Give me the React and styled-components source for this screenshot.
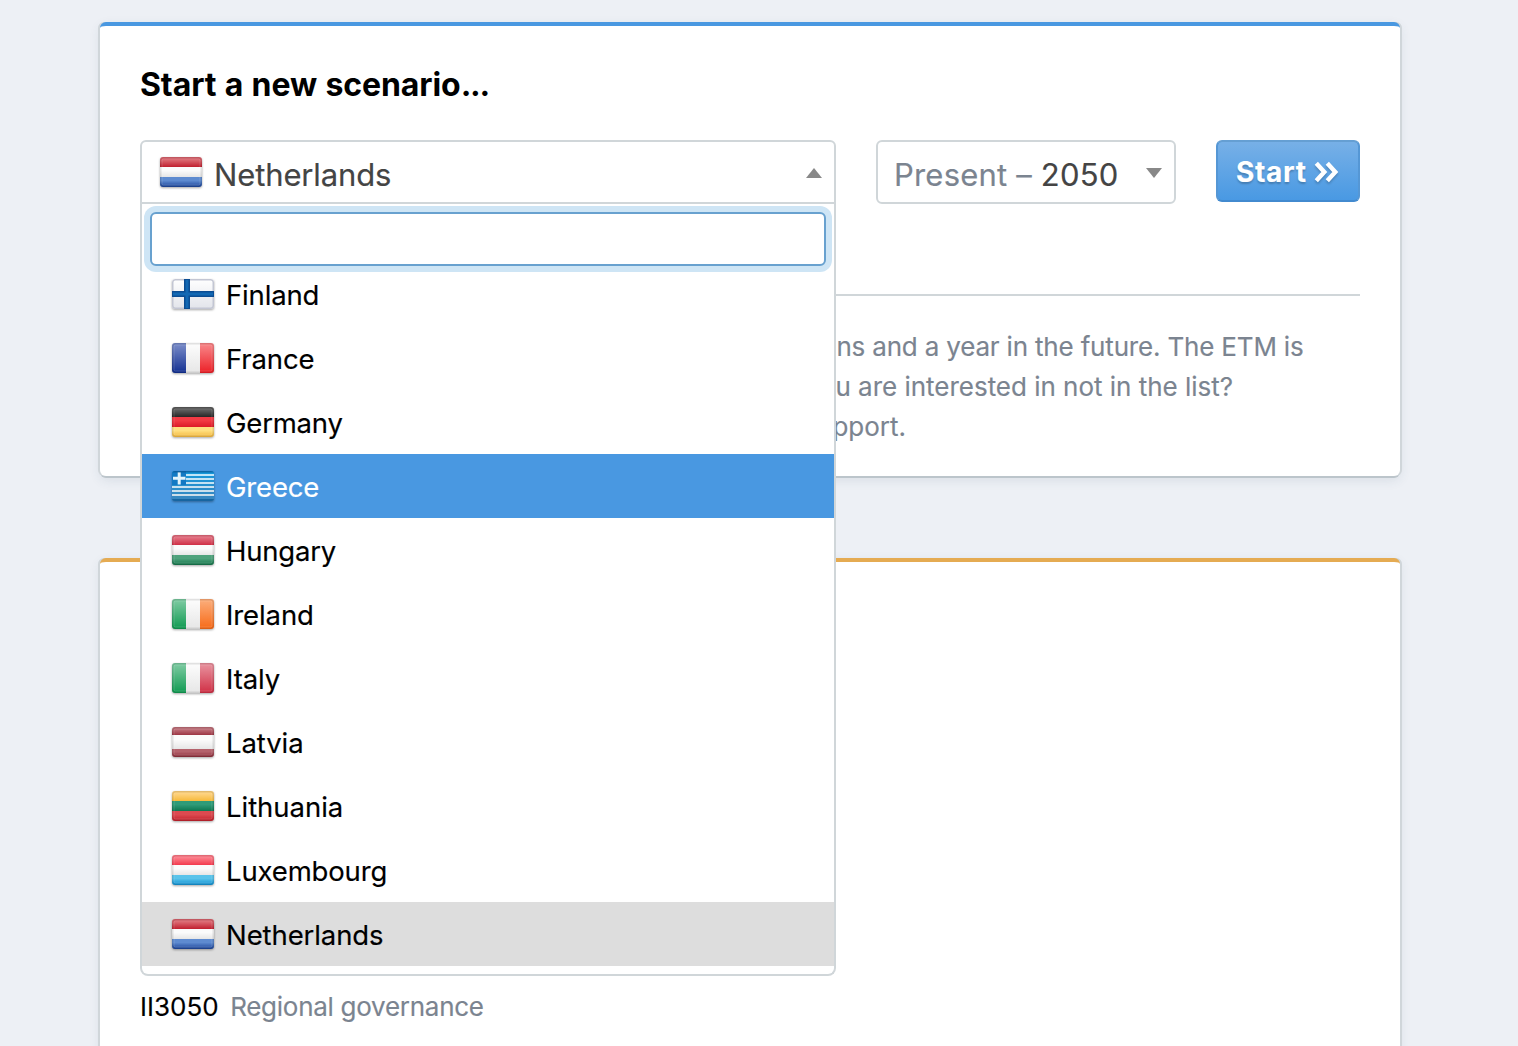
import React, { useId } from "react";
import styled, { createGlobalStyle } from "styled-components";

const GlobalStyle = createGlobalStyle`
  * { box-sizing: border-box; }
  body {
    margin: 0;
    background: #edf0f5;
    color: #000;
    font-family: Inter, "Liberation Sans", sans-serif;
    -webkit-text-stroke: 0.15px currentColor;
  }
`;

const Page = styled.main`
  height: 1046px;
  padding: 22px 118px 0 100px;
  overflow: hidden;
  display: flex;
  flex-direction: column;
  gap: 82px;
`;

const Card = styled.section`
  flex: none;
  height: ${(p) => p.$height}px;
  padding: ${(p) => p.$top}px 40px 0;
  background: #fff;
  border-top: 4px solid ${(p) => p.$accent};
  border-radius: 6px;
  box-shadow: -2px 0 0 #d0d6da, 2px 0 0 #d0d6da, 0 2px 0 #bcc5cb,
    0 4px 12px rgba(50, 70, 100, 0.11);
`;

const Title = styled.h2`
  margin: 0 0 35px;
  font-size: 32px;
  line-height: 40px;
  font-weight: 700;
  letter-spacing: -0.09px;
  word-spacing: 0.9px;
  -webkit-text-stroke: 0;
`;

const Dots = styled.span`
  letter-spacing: -1.2px;
`;

const Controls = styled.div`
  display: flex;
  align-items: flex-start;
  gap: 40px;
  height: 154px;
`;

const Select = styled.div`
  position: relative;
  flex: none;
  width: ${(p) => p.$width}px;
`;

const SelectBox = styled.div`
  display: flex;
  align-items: center;
  height: 64px;
  padding: 0 12px 0 ${(p) => p.$inset}px;
  border: 2px solid #d0d6d9;
  border-radius: ${(p) => (p.$open ? "6px 6px 0 0" : "6px")};
  background: #fff;
`;

const SelectValue = styled.span`
  flex: 1;
  padding-top: 5px;
  margin-left: ${(p) => p.$gap || 0}px;
  font-size: 31px;
  line-height: 40px;
  letter-spacing: ${(p) => p.$spacing}px;
  color: #444;
  white-space: pre;
`;

const Muted = styled.span`
  color: #7b8490;
`;

const Caret = styled.span`
  width: 0;
  height: 0;
  border: 8px solid transparent;
  border-width: ${(p) => (p.$up ? "0 8px 10px" : "10px 8px 0")};
  border-color: ${(p) => (p.$up ? "transparent transparent #888" : "#888 transparent transparent")};
  margin-top: 2px;
`;

const StartButton = styled.button`
  display: flex;
  align-items: center;
  flex: none;
  width: 144px;
  height: 62px;
  padding: 2px 0 0 18px;
  border: 2px solid;
  border-color: #659fd3 #5597d5 #428acf;
  border-radius: 6px;
  background: linear-gradient(#77b0e7, #4999e3) padding-box, #5597d5;
  color: #fff;
  font: 700 28px/40px Inter, "Liberation Sans", sans-serif;
  letter-spacing: 0.7px;
  text-shadow: 0 2px 2px rgba(0, 0, 0, 0.22);
`;

const Chevrons = styled.svg`
  margin-left: 8px;
  width: 24px;
  height: 24px;
  overflow: visible;
  filter: drop-shadow(0 2px 1px rgba(0, 0, 0, 0.2));
`;

const Help = styled.div`
  border-top: 2px solid #d0d6d9;
  padding-top: 31px;
`;

const HelpLine = styled.p`
  margin: 0;
  width: ${(p) => p.$end}px;
  text-align: right;
  font-size: 26px;
  line-height: 40px;
  letter-spacing: ${(p) => p.$spacing}px;
  color: #7b8490;
  white-space: nowrap;
`;

const Dropdown = styled.div`
  position: absolute;
  top: 64px;
  left: 0;
  z-index: 5;
  width: 100%;
  height: 772px;
  padding-top: 8px;
  display: flex;
  flex-direction: column;
  background: #fff;
  border: 2px solid #d0d6d9;
  border-top: 0;
  border-radius: 0 0 8px 8px;
`;

const Search = styled.input`
  flex: none;
  height: 54px;
  margin: 0 8px 6px;
  border: 2px solid #68a1cf;
  border-radius: 6px;
  background: #fff;
  box-shadow: 0 0 0 6px #cee5f5;
  outline: none;
`;

const List = styled.ul`
  display: flex;
  flex-direction: column;
  justify-content: flex-end;
  height: 694px;
  margin: 0;
  padding: 0;
  overflow: hidden;
  list-style: none;
`;

const Option = styled.li`
  flex: none;
  display: flex;
  align-items: center;
  gap: 12px;
  height: 64px;
  padding-left: 30px;
  font-size: 27.5px;
  letter-spacing: ${(p) => p.$spacing || 0}px;
  color: ${(p) => (p.$highlighted ? "#fff" : "#000")};
  background: ${(p) => (p.$highlighted ? "#4998e1" : p.$selected ? "#ddd" : "transparent")};
`;

const OptionName = styled.span`
  padding-top: 2px;
`;

const Scenario = styled.div`
  display: flex;
  gap: 11.5px;
  font-size: 26px;
  line-height: 40px;
`;

const ScenarioNote = styled.span`
  color: #7b8490;
  letter-spacing: -0.27px;
`;

const FlagSvg = styled.svg`
  flex: none;
  width: 42px;
  height: 30px;
  overflow: visible;
  filter: drop-shadow(0 1px 1px rgba(0, 0, 0, 0.35));
`;

const WHITE = ["#fbfbfb", "#e6e6e6"];

const FLAGS = {
  Netherlands: { bands: [["#d9636c", "#c01f2f"], WHITE, ["#5e8bd0", "#1c4499"]] },
  France: { vertical: true, bands: [["#7285c4", "#122f91"], WHITE, ["#f77f82", "#ec1f26"]] },
  Germany: { bands: [["#5a5a5a", "#262626"], ["#f23a44", "#dc1a27"], ["#ffdf80", "#f3b73c"]] },
  Hungary: { bands: [["#e0697a", "#cf2f45"], WHITE, ["#4fa27c", "#14754a"]] },
  Ireland: { vertical: true, bands: [["#76c79c", "#0f9a51"], WHITE, ["#fba873", "#f76a17"]] },
  Italy: { vertical: true, bands: [["#76c79c", "#0f9a51"], WHITE, ["#e68b98", "#d02f45"]] },
  Latvia: { sizes: [8, 14, 8], bands: [["#bd6c76", "#9c3543"], WHITE, ["#b4626c", "#8d2c39"]] },
  Lithuania: { bands: [["#fdd079", "#f6b93a"], ["#2f9b78", "#0d7650"], ["#dc4a50", "#c2202b"]] },
  Luxembourg: { bands: [["#fb7784", "#f33a4d"], WHITE, ["#59c3ea", "#1090d2"]] },
};

function Bands({ id, bands, vertical, sizes }) {
  const lengths = sizes || (vertical ? [14, 14, 14] : [10, 10, 10]);
  let start = 0;
  return bands.map(([light, dark], i) => {
    const from = start;
    start += lengths[i];
    return (
      <g key={i}>
        <linearGradient id={`${id}b${i}`} x1="0" y1="0" x2="0" y2="1">
          <stop offset="0" stopColor={light} />
          <stop offset={vertical ? 0.1 : 0.35} stopColor={light} />
          <stop offset="1" stopColor={dark} />
        </linearGradient>
        <rect
          x={vertical ? from : 0}
          y={vertical ? 0 : from}
          width={vertical ? lengths[i] : 42}
          height={vertical ? 30 : lengths[i]}
          fill={`url(#${id}b${i})`}
        />
      </g>
    );
  });
}

function Finland({ id }) {
  return (
    <>
      <linearGradient id={`${id}w`} x1="0" y1="0" x2="0" y2="1">
        <stop offset="0" stopColor="#fff" />
        <stop offset="1" stopColor="#e2e4ea" />
      </linearGradient>
      <rect width="42" height="30" fill={`url(#${id}w)`} />
      <rect x="0.75" y="0.75" width="40.500" height="28.500" rx="2.500" fill="none" stroke="#c3c6d3" strokeWidth="1.500" />
      <path d="M12 0h6v30h-6zM0 12h42v6H0z" fill="#0b4d93" />
      <path d="M13.500 1h3v28h-3zM1 13.500h40v3H1z" fill="#1268b3" />
    </>
  );
}

function Greece({ id }) {
  return (
    <>
      <linearGradient id={`${id}s`} x1="0" y1="0" x2="0" y2="1">
        <stop offset="0" stopColor="#1499dd" />
        <stop offset="1" stopColor="#3b86bd" />
      </linearGradient>
      <linearGradient id={`${id}l`} gradientUnits="userSpaceOnUse" x1="0" y1="0" x2="0" y2="30">
        <stop offset="0" stopColor="#bfe6fa" />
        <stop offset="1" stopColor="#cfdce6" />
      </linearGradient>
      <rect width="42" height="30" fill={`url(#${id}s)`} />
      <path
        d="M0 3h42v2H0zM0 7h42v2H0zM0 11h42v2H0zM0 15h42v2H0zM0 19h42v2H0zM0 23h42v2H0z"
        fill={`url(#${id}l)`}
      />
      <rect width="14" height="14" fill="#1279c4" />
      <path d="M5.700 1h3v12.500h-3zM1 5.700h12.500v3H1z" fill="#e3f3fb" />
      <path d="M0 0h42v1.500H0zM0 28h42v2H0z" fill="#0c5a97" fillOpacity="0.75" />
    </>
  );
}

function Flag({ country }) {
  const id = useId().replace(/[^a-zA-Z0-9]/g, "");
  const plain = country === "Finland" || country === "Greece";
  return (
    <FlagSvg viewBox="0 0 42 30" aria-hidden="true">
      <clipPath id={`${id}c`}>
        <rect width="42" height="30" rx="3" />
      </clipPath>
      <g clipPath={`url(#${id}c)`}>
        {country === "Finland" && <Finland id={id} />}
        {country === "Greece" && <Greece id={id} />}
        {!plain && (
          <>
            <Bands id={id} {...FLAGS[country]} />
            <rect x="2" y="2" width="38" height="26" rx="1.500" fill="none" stroke="#fff" strokeOpacity="0.14" />
            <rect x="0.75" y="0.75" width="40.500" height="28.500" rx="2.500" fill="none" stroke="#000" strokeOpacity="0.1" strokeWidth="1.500" />
          </>
        )}
      </g>
    </FlagSvg>
  );
}

const COUNTRIES = [
  { name: "Finland", spacing: -0.15 },
  { name: "France", spacing: -0.12 },
  { name: "Germany", spacing: -0.2 },
  { name: "Greece", spacing: -0.18, highlighted: true },
  { name: "Hungary", spacing: -0.2 },
  { name: "Ireland", spacing: -0.1 },
  { name: "Italy", spacing: -0.1 },
  { name: "Latvia", spacing: -0.1 },
  { name: "Lithuania", spacing: -0.04 },
  { name: "Luxembourg", spacing: -0.15 },
  { name: "Netherlands", spacing: -0.09, selected: true },
];

export default function App() {
  return (
    <>
      <GlobalStyle />
      <Page>
        <Card $height={454} $top={39} $accent="#4998e1">
          <Title>
            Start a new scenario<Dots>...</Dots>
          </Title>
          <Controls>
            <Select $width={696}>
              <SelectBox $open $inset={18}>
                <Flag country="Netherlands" />
                <SelectValue $gap={12} $spacing={-0.13}>Netherlands</SelectValue>
                <Caret $up />
              </SelectBox>
              <Dropdown>
                <Search type="text" aria-label="Search" />
                <List>
                  {COUNTRIES.map((c) => (
                    <Option key={c.name} $spacing={c.spacing} $highlighted={c.highlighted} $selected={c.selected}>
                      <Flag country={c.name} />
                      <OptionName>{c.name}</OptionName>
                    </Option>
                  ))}
                </List>
              </Dropdown>
            </Select>
            <Select $width={300}>
              <SelectBox $inset={16}>
                <SelectValue $spacing={0.2}>
                  <Muted>Present – </Muted>2050
                </SelectValue>
                <Caret />
              </SelectBox>
            </Select>
            <StartButton type="button">
              Start
              <Chevrons viewBox="0 0 24 24" fill="none" stroke="#fff" strokeWidth="4.400" aria-hidden="true">
                <path d="M1.300 3.300l8 8.700-8 8.700M12.300 3.300l8 8.700-8 8.700" />
              </Chevrons>
            </StartButton>
          </Controls>
          <Help>
            <HelpLine $end={1163.5} $spacing={-0.18}>regions and a year in the future. The ETM is</HelpLine>
            <HelpLine $end={1093} $spacing={-0.02}>you are interested in not in the list?</HelpLine>
            <HelpLine $end={766} $spacing={0}>support.</HelpLine>
          </Help>
        </Card>
        <Card $height={520} $top={425} $accent="#e5ab52">
          <Scenario>
            <span>II3050</span>
            <ScenarioNote>Regional governance</ScenarioNote>
          </Scenario>
        </Card>
      </Page>
    </>
  );
}
